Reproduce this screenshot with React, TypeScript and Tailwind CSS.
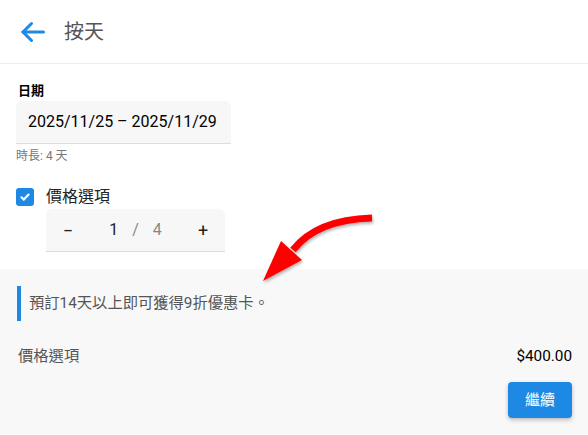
import React, { useState } from 'react';

const FONT = "font-['Roboto','Noto_Sans_CJK_TC',sans-serif]";

const BackArrow: React.FC = () => (
  <svg width="24" height="22" viewBox="0 0 24 22" fill="none" stroke="#1e88e5" strokeWidth="3" strokeLinecap="round" strokeLinejoin="round">
    <path d="M22.5 11H2" />
    <path d="M10.5 2.5L2 11l8.5 8.5" />
  </svg>
);

const RedArrow: React.FC = () => (
  <svg className="absolute left-0 top-0 pointer-events-none" width="588" height="435" viewBox="0 0 588 435">
    <defs>
      <filter id="shadow" x="-20%" y="-20%" width="140%" height="140%">
        <feDropShadow dx="1" dy="2" stdDeviation="1.5" floodColor="#000" floodOpacity="0.3" />
      </filter>
    </defs>
    <g filter="url(#shadow)">
      <path d="M372 218 C 340 219, 310 228, 293 250" stroke="#ff0000" strokeWidth="7" fill="none" />
      <polygon points="281,241 302,260 263,281" fill="#ff0000" />
    </g>
  </svg>
);

const App: React.FC = () => {
  const [checked, setChecked] = useState(true);
  const [qty, setQty] = useState(1);

  return (
    <div className={`${FONT} relative w-full min-h-screen bg-white text-[#222]`}>
      <header className="h-16 flex items-center border-b border-[#eeeeee] pl-[21px]">
        <BackArrow />
        <span className="ml-[19px] text-[20px] text-[#555]">按天</span>
      </header>

      <div className="px-4 pt-[17px]">
        <div className="text-[13px] leading-5 font-bold text-black ml-[2px]">日期</div>
        <div className="w-[215px] h-[43px] flex items-center pl-3 bg-[#f7f7f7] rounded-t-md border-b border-[#dddddd] text-[16px] text-black whitespace-nowrap overflow-hidden">
          2025/11/25 – 2025/11/29
        </div>
        <div className="mt-[4px] text-[12px] leading-4 text-[#777]">時長: 4 天</div>

        <label className="mt-[22px] flex items-center h-[22px] cursor-pointer">
          <span
            onClick={() => setChecked(!checked)}
            className="w-[18px] h-[18px] rounded-[3px] bg-[#1e88e5] flex items-center justify-center"
          >
            {checked && (
              <svg width="12" height="12" viewBox="0 0 12 12" fill="none" stroke="white" strokeWidth="2.2" strokeLinecap="round" strokeLinejoin="round">
                <path d="M2.5 6.3l2.3 2.3 4.8-5" />
              </svg>
            )}
          </span>
          <span className="ml-3 text-[16px] text-[#222]">價格選項</span>
        </label>

        <div className="ml-[30px] mt-[1px] w-[179px] h-[43px] flex items-center bg-[#f7f7f7] rounded-t-md border-b border-[#dddddd]">
          <button onClick={() => setQty(Math.max(1, qty - 1))} className="w-11 h-full flex items-center justify-center text-[18px] text-[#222]">
            −
          </button>
          <div className="flex-1 flex items-center justify-center gap-[14px] text-[16px]">
            <span className="text-[#222]">{qty}</span>
            <span className="text-[#888]">/</span>
            <span className="text-[#888]">4</span>
          </div>
          <button onClick={() => setQty(Math.min(4, qty + 1))} className="w-11 h-full flex items-center justify-center text-[18px] text-[#222]">
            +
          </button>
        </div>
      </div>

      <section className="mt-[17px] bg-[#f8f8f8] px-4 pt-[17px] pb-4">
        <div className="flex items-center h-[35px]">
          <div className="w-1 h-full bg-[#1e88e5] ml-[1px]" />
          <p className="ml-2 text-[15.3px] text-[#555]">預訂14天以上即可獲得9折優惠卡。</p>
        </div>
        <div className="mt-[23px] flex items-center justify-between leading-6 text-[15.3px]">
          <span className="text-[#555] ml-[2px]">價格選項</span>
          <span className="text-black">$400.00</span>
        </div>
        <div className="mt-[14px] flex justify-end">
          <button className="w-16 h-9 rounded-[4px] bg-[#1e88e5] text-white text-[15px] shadow-[0_2px_4px_rgba(0,0,0,0.25)]">
            繼續
          </button>
        </div>
      </section>

      <RedArrow />
    </div>
  );
};

export default App;
